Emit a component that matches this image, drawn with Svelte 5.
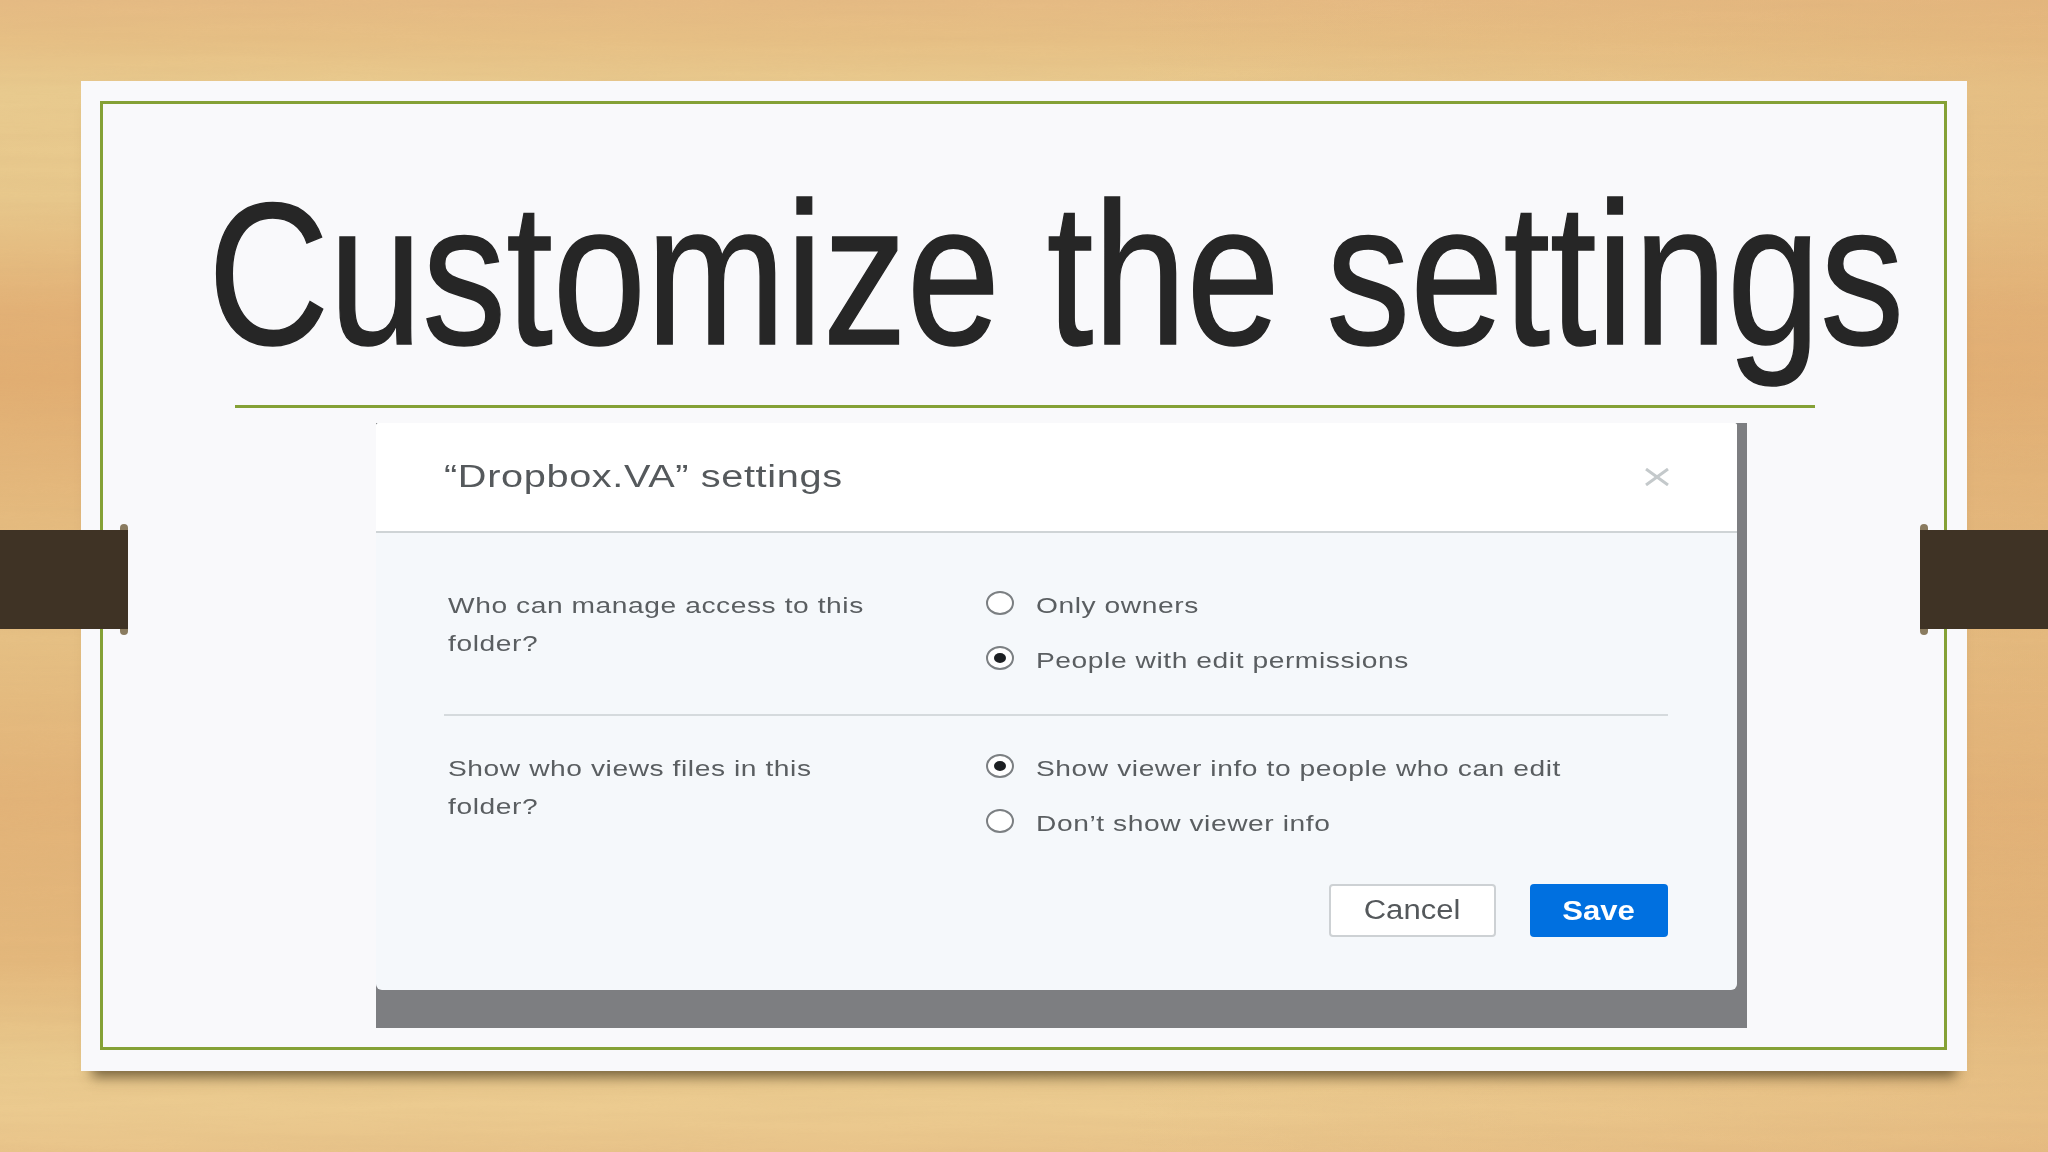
<script>
    const sections = [
        {
            question: ['Who can manage access to this', 'folder?'],
            options: [
                { label: 'Only owners', checked: false },
                { label: 'People with edit permissions', checked: true }
            ]
        },
        {
            question: ['Show who views files in this', 'folder?'],
            options: [
                { label: 'Show viewer info to people who can edit', checked: true },
                { label: 'Don’t show viewer info', checked: false }
            ]
        }
    ];
</script>

<div class="page">
    <!-- wood grain over the background gradient -->
    <svg class="grain" width="2048" height="1152" aria-hidden="true">
        <filter id="wood">
            <feTurbulence type="fractalNoise" baseFrequency="0.004 0.09" numOctaves="4" seed="7" />
            <feColorMatrix values="0 0 0 0 0.62  0 0 0 0 0.4  0 0 0 0 0.18  0.5 0 0 0 -0.12" />
        </filter>
        <rect width="2048" height="1152" filter="url(#wood)" />
    </svg>

    <div class="strap left"><span class="cap"></span><span class="band"></span></div>
    <div class="strap right"><span class="cap"></span><span class="band"></span></div>

    <div class="paper">
        <div class="frame">
            <h1>Customize the settings</h1>
            <div class="rule"></div>

            <div class="dialog-shot">
                <div class="dialog">
                    <header>
                        <h2><span class="wide">“Dropbox.VA” settings</span></h2>
                        <svg class="close" width="24" height="18" viewBox="0 0 24 18" aria-hidden="true">
                            <path d="M1 1 L23 17 M23 1 L1 17" stroke="#c4c9cb" stroke-width="3" fill="none" />
                        </svg>
                    </header>

                    <div class="body">
                        {#each sections as section, i}
                            <div class="row" class:first={i === 0}>
                                <div class="question">
                                    {#each section.question as line}
                                        <div><span class="wide">{line}</span></div>
                                    {/each}
                                </div>
                                <div class="options">
                                    {#each section.options as opt}
                                        <div class="option">
                                            <span class="radio" class:on={opt.checked}></span>
                                            <span class="wide">{opt.label}</span>
                                        </div>
                                    {/each}
                                </div>
                            </div>
                        {/each}

                        <div class="actions">
                            <button class="cancel"><span>Cancel</span></button>
                            <button class="save"><span>Save</span></button>
                        </div>
                    </div>
                </div>
            </div>
        </div>
    </div>
</div>

<style>
    :global(body) {
        margin: 0;
    }

    .page {
        position: relative;
        width: 2048px;
        height: 1152px;
        box-sizing: border-box;
        padding: 81px;
        overflow: hidden;
        font-family: "Liberation Sans", Arial, sans-serif;
        background:
            linear-gradient(90deg, rgba(226, 176, 118, 0) 55%, rgba(226, 176, 118, 0.45) 100%),
            linear-gradient(180deg,
            #e6bb84 0,
            #e7c085 40px,
            #e9cb8f 90px,
            #e8c88c 200px,
            #e3b176 310px,
            #e2ae72 380px,
            #e5bb7f 520px,
            #e6c084 640px,
            #e3b378 800px,
            #e4b87c 960px,
            #e9c98d 1060px,
            #eccb90 1110px,
            #e9c48a 1152px);
    }

    .grain {
        position: absolute;
        left: 0;
        top: 0;
        opacity: 0.35;
    }

    .paper {
        position: relative;
        width: 1886px;
        height: 990px;
        box-sizing: border-box;
        padding: 20px 20px 21px 19px;
        background: #f9f9fb;
        box-shadow: 0 17px 12px -11px rgba(70, 55, 25, 0.7);
    }

    .frame {
        height: 100%;
        box-sizing: border-box;
        border: 3px solid #85a136;
    }

    h1 {
        margin: 0 0 0 105px;
        height: 301px;
        font-size: 203px;
        font-weight: 400;
        line-height: 340px;
        color: #262626;
        -webkit-text-stroke: 1.5px #262626;
        white-space: nowrap;
        transform: scaleX(0.826);
        transform-origin: left top;
    }

    .rule {
        width: 1580px;
        height: 3px;
        margin-left: 132px;
        background: #85a136;
    }

    .dialog-shot {
        width: 1371px;
        height: 605px;
        margin: 15px 0 0 273px;
        background: #7d7e81;
    }

    .dialog {
        width: 1361px;
        height: 567px;
        border-radius: 3px 3px 6px 6px;
        overflow: hidden;
        background: #f5f8fb;
    }

    /* the dialog in the slide is a picture stretched sideways */
    .wide {
        display: inline-block;
        transform: scaleX(1.28);
        transform-origin: left center;
        white-space: nowrap;
    }

    header {
        display: flex;
        align-items: center;
        justify-content: space-between;
        height: 110px;
        box-sizing: border-box;
        padding: 0 68px 0 68px;
        background: #fff;
        border-bottom: 2px solid #cfd4d6;
    }

    h2 {
        margin: 0;
        font-size: 31px;
        font-weight: 400;
        letter-spacing: 0.5px;
        color: #55595c;
    }

    .body {
        padding: 0 69px 0 68px;
    }

    .row {
        display: grid;
        grid-template-columns: 538px 1fr;
        padding: 34px 0 0 4px;
        font-size: 22px;
        letter-spacing: 0.45px;
        line-height: 38px;
        color: #5a5e61;
    }

    .row.first {
        padding: 54px 0 34px 4px;
        border-bottom: 2px solid #d5dadd;
    }

    .options {
        display: flex;
        flex-direction: column;
        gap: 17px;
    }

    .option {
        display: flex;
        align-items: center;
        gap: 22px;
    }

    .radio {
        display: flex;
        align-items: center;
        justify-content: center;
        flex: none;
        width: 28px;
        height: 24px;
        margin-bottom: 6px;
        box-sizing: border-box;
        border: 2px solid #7b7f82;
        border-radius: 50%;
        background: #fff;
    }

    .radio.on::after {
        content: "";
        width: 12px;
        height: 10px;
        border-radius: 50%;
        background: #1c1f22;
    }

    .actions {
        display: flex;
        justify-content: flex-end;
        gap: 34px;
        margin-top: 41px;
    }

    button {
        height: 53px;
        box-sizing: border-box;
        border-radius: 4px;
        font-family: "Liberation Sans", Arial, sans-serif;
        font-size: 27px;
    }

    button span {
        display: inline-block;
        transform: scaleX(1.15);
    }

    .cancel {
        width: 167px;
        border: 2px solid #cdd1d4;
        background: #fff;
        color: #54585b;
    }

    .save {
        width: 138px;
        padding-top: 3px;
        border: none;
        background: #0070e0;
        color: #fff;
        font-weight: 700;
    }

    .strap {
        position: absolute;
        top: 530px;
        z-index: 1;
        width: 128px;
        height: 99px;
    }

    .strap.left {
        left: 0;
    }

    .strap.right {
        right: 0;
    }

    .band {
        position: absolute;
        inset: 0;
        background: #3f3325;
    }

    .cap {
        position: absolute;
        top: -6px;
        width: 8px;
        height: 111px;
        border-radius: 4px;
        background: #8a7b5f;
    }

    .strap.left .cap {
        right: 0;
    }

    .strap.right .cap {
        left: 0;
    }
</style>
